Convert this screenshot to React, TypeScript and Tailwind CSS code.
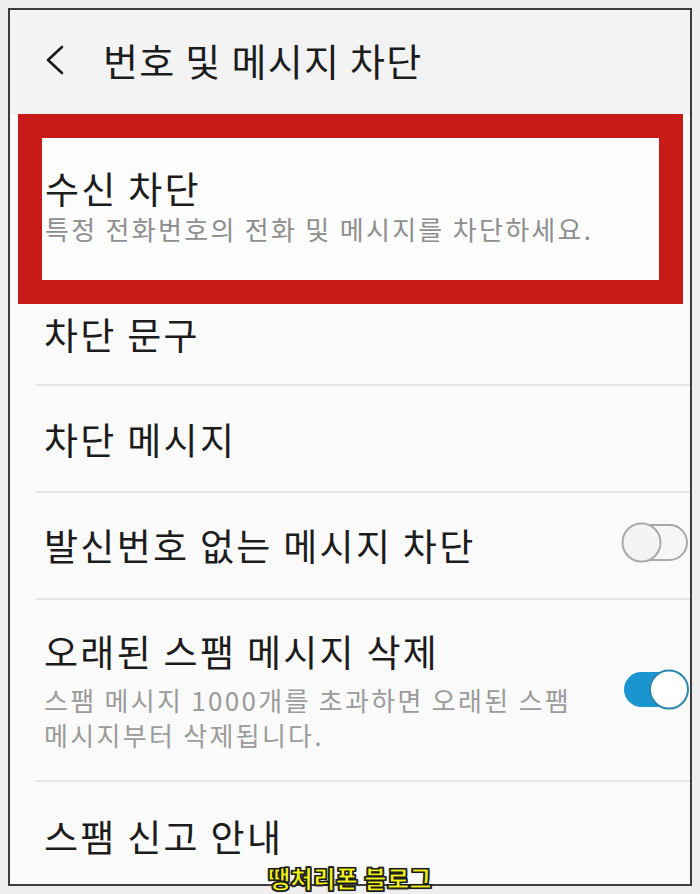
import React from "react";

const font = { fontFamily: '"Noto Sans CJK KR", "Noto Sans", sans-serif' };

function Row({
  children,
  className = "",
  divider = true,
}: {
  children: React.ReactNode;
  className?: string;
  divider?: boolean;
}) {
  return (
    <div className={`relative flex flex-col ${className}`}>
      {children}
      {divider && <div className="absolute bottom-0 left-[25px] right-0 h-[2px] bg-[#e6e6e6]" />}
    </div>
  );
}

function Toggle({ on }: { on: boolean }) {
  if (on) {
    return (
      <svg width="68" height="46" viewBox="0 0 68 46" className="shrink-0">
        <rect x="2" y="5" width="63" height="35" rx="17.5" fill="#1b95cf" />
        <circle cx="47" cy="22.5" r="19" fill="#ffffff" stroke="#2b86a8" strokeWidth="2" />
      </svg>
    );
  }
  return (
    <svg width="68" height="42" viewBox="0 0 68 42" className="shrink-0">
      <rect x="2" y="3" width="64" height="35" rx="17.5" fill="#f6f6f6" stroke="#a9a9a9" strokeWidth="2" />
      <circle cx="20.5" cy="20.5" r="19" fill="#f4f4f4" stroke="#a9a9a9" strokeWidth="2" />
    </svg>
  );
}

const main = "text-[37px] leading-[40px] text-[#1c1c1c] tracking-[2.3px]";
const sub = "text-[26px] text-[#8e8e8e] tracking-[2.3px]";

export default function App() {
  return (
    <div className="relative w-[700px] h-[894px] bg-[#eeeeee] pt-[8px] pl-[8px]" style={font}>
      <div className="w-[684px] h-[878px] border-2 border-[#3c3c3c] bg-[#fafafa] flex flex-col overflow-hidden">
        {/* Header */}
        <div className="h-[104px] shrink-0 bg-[#f3f3f3] flex items-center pl-[34px]">
          <svg width="22" height="30" viewBox="0 0 22 30" className="mt-[-4px]">
            <path d="M18 2 L4 15 L18 28" fill="none" stroke="#1a1a1a" strokeWidth="2.6" strokeLinecap="round" strokeLinejoin="round" />
          </svg>
          <div className="ml-[37px] text-[38px] leading-none text-[#1c1c1c] tracking-[1.3px] mt-[-4px]">
            번호 및 메시지 차단
          </div>
        </div>

        {/* Highlighted item */}
        <div className="shrink-0 ml-[8px] mr-[7px] h-[190px] border-[24px] border-[#c81b17] bg-[#fcfcfc] flex flex-col pl-[3px] pt-[30px]">
          <div className={main}>수신 차단</div>
          <div className={`mt-[6px] leading-[30px] ${sub}`}>
            특정 전화번호의 전화 및 메시지를 차단하세요.
          </div>
        </div>

        <Row className="h-[82px] shrink-0 pl-[34px] pt-[10px]">
          <div className={main}>차단 문구</div>
        </Row>

        <Row className="h-[107px] shrink-0 pl-[34px] justify-center">
          <div className={`${main} mt-[-2px]`}>차단 메시지</div>
        </Row>

        <Row className="h-[107px] shrink-0 pl-[34px] pr-[1px]">
          <div className="flex h-full items-center justify-between">
            <div className={`${main} mt-[-4px]`}>발신번호 없는 메시지 차단</div>
            <div className="mt-[-8px]">
              <Toggle on={false} />
            </div>
          </div>
        </Row>

        <Row className="h-[182px] shrink-0 pl-[34px]">
          <div className="flex h-full items-start justify-between pt-[31px]">
            <div className="flex flex-col">
              <div className={main}>오래된 스팸 메시지 삭제</div>
              <div className={`mt-[11px] leading-[35px] ${sub} text-[#9b9b9b]`}>
                스팸 메시지 1000개를 초과하면 오래된 스팸
                <br />
                메시지부터 삭제됩니다.
              </div>
            </div>
            <div className="mt-[36px]">
              <Toggle on={true} />
            </div>
          </div>
        </Row>

        <Row className="flex-1 pl-[34px] pt-[34px]" divider={false}>
          <div className={main}>스팸 신고 안내</div>
        </Row>
      </div>

      {/* Watermark overlay */}
      <div
        className="absolute left-[268px] top-[864px] text-[24px] font-black leading-[28px] text-[#f3f31a] tracking-[0.5px]"
        style={{
          WebkitTextStroke: "1.2px #1a1a1a",
          textShadow: "0 0 2px #222, 1px 1px 0 #222, -1px -1px 0 #222, 1px -1px 0 #222, -1px 1px 0 #222",
        }}
      >
        땡처리폰 블로그
      </div>
    </div>
  );
}
